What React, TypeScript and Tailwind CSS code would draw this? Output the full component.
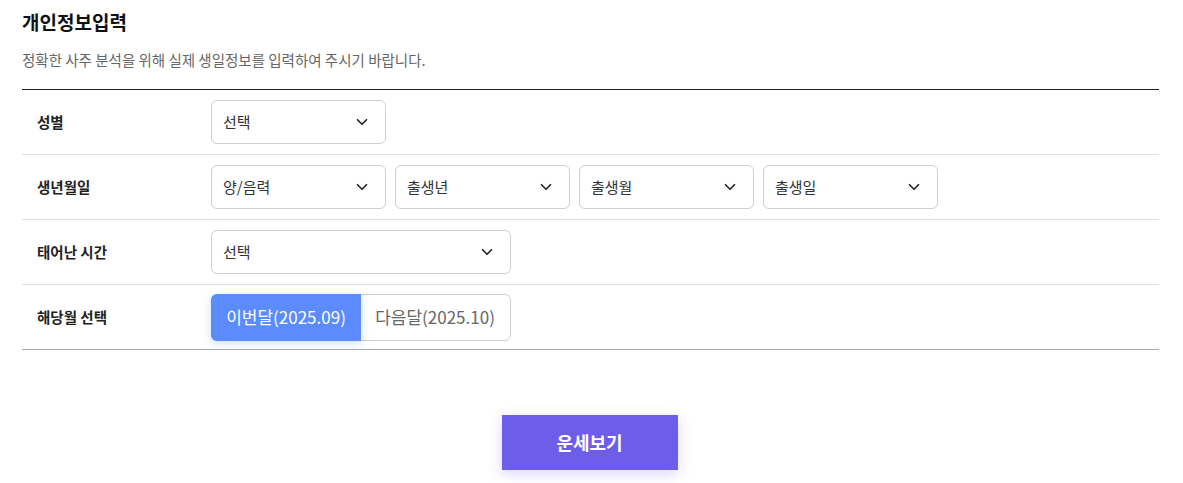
import React, { useState } from 'react';
import { ChevronDown } from 'lucide-react';

const font = { fontFamily: '"Noto Sans CJK KR", "Noto Sans", sans-serif' };

function Select({ label, width }: { label: string; width: string }) {
  return (
    <div
      className={`${width} h-[44px] flex items-center justify-between pl-[11px] pr-[14px] border border-[#cfcfcf] rounded-[6px] bg-white text-[15px] text-[#333]`}
    >
      <span>{label}</span>
      <ChevronDown className="w-[18px] h-[18px] text-[#222]" strokeWidth={2.2} />
    </div>
  );
}

function Row({ label, children, last }: { label: string; children: React.ReactNode; last?: boolean }) {
  return (
    <div
      className={`flex items-center h-[65px] border-b ${last ? 'border-[#a9a9a9]' : 'border-[#e0e0e0]'}`}
    >
      <div className="w-[189px] pl-[15px] text-[14.5px] font-bold text-[#222]">{label}</div>
      <div className="flex gap-[9px]">{children}</div>
    </div>
  );
}

export default function App() {
  const [month, setMonth] = useState<'this' | 'next'>('this');

  return (
    <div className="w-[1183px] h-[483px] bg-white pl-[22px] pr-[24px] pt-[9px]" style={font}>
      <h2 className="text-[19px] font-bold text-[#111] leading-[26px]">개인정보입력</h2>
      <p className="mt-[14px] text-[14.5px] text-[#666] leading-[22px]">
        정확한 사주 분석을 위해 실제 생일정보를 입력하여 주시기 바랍니다.
      </p>

      <div className="mt-[18px] border-t border-[#222]">
        <Row label="성별">
          <Select label="선택" width="w-[175px]" />
        </Row>
        <Row label="생년월일">
          <Select label="양/음력" width="w-[175px]" />
          <Select label="출생년" width="w-[175px]" />
          <Select label="출생월" width="w-[175px]" />
          <Select label="출생일" width="w-[175px]" />
        </Row>
        <Row label="태어난 시간">
          <Select label="선택" width="w-[300px]" />
        </Row>
        <Row label="해당월 선택" last>
          <div className="flex w-[300px] h-[47px] border border-[#cfcfcf] rounded-[6px] text-[17px]">
            <button
              onClick={() => setMonth('this')}
              className={`w-[150px] -m-px rounded-l-[6px] ${
                month === 'this'
                  ? 'bg-[#5b8bfd] text-white shadow-[0_2px_8px_rgba(91,139,253,0.3)]'
                  : 'text-[#666]'
              }`}
            >
              이번달(2025.09)
            </button>
            <button
              onClick={() => setMonth('next')}
              className={`flex-1 rounded-r-[6px] ${
                month === 'next' ? 'bg-[#5b8bfd] text-white' : 'text-[#666]'
              }`}
            >
              다음달(2025.10)
            </button>
          </div>
        </Row>
      </div>

      <div className="flex justify-center mt-[65px] pr-[2px]">
        <button className="w-[176px] h-[55px] bg-[#6e5cea] text-white text-[18px] font-bold shadow-[0_4px_12px_rgba(110,92,234,0.25)]">
          운세보기
        </button>
      </div>
    </div>
  );
}
